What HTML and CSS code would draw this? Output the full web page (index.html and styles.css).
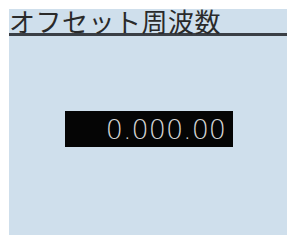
FILE: index.html
```html
<!DOCTYPE html>
<html lang="ja">
<head>
<meta charset="utf-8">
<link rel="stylesheet" href="styles.css">
</head>
<body>
<div class="screen">
  <div class="title">オフセット周波数</div>
  <div class="body">
    <div class="value">0.000.00</div>
  </div>
</div>
</body>
</html>
```
FILE: styles.css
```css
html, body {
  margin: 0;
  padding: 0;
  background: #ffffff;
}
body {
  width: 290px;
  height: 235px;
  overflow: hidden;
  font-family: "Noto Sans CJK JP", "Noto Sans", sans-serif;
}
.screen {
  margin: 9px 3px 0 9px;
  height: 226px;
  background: #cfdfec;
  display: flex;
  flex-direction: column;
}
.title {
  height: 24px;
  line-height: 24px;
  font-size: 26px;
  font-weight: 400;
  color: #2a2a2a;
  letter-spacing: 0.5px;
  border-bottom: 3px solid #3a3f46;
  white-space: nowrap;
}
.body {
  flex: 1;
  padding-top: 75px;
  padding-left: 56px;
}
.value {
  width: 161px;
  height: 36px;
  background: #050505;
  color: #d4d4d4;
  font-family: "DejaVu Sans", sans-serif;
  font-size: 27px;
  font-weight: 300;
  line-height: 37px;
  text-align: right;
  padding-right: 7px;
}
```
